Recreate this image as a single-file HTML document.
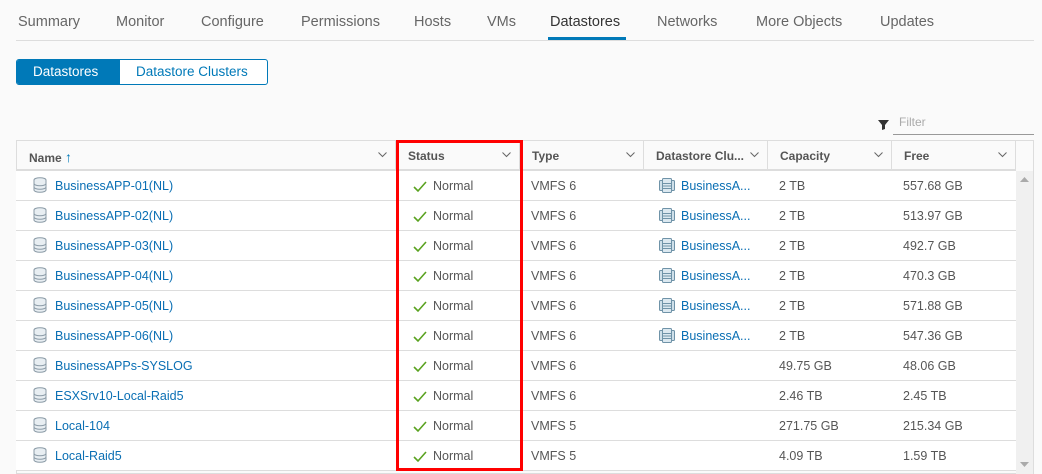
<!DOCTYPE html>
<html><head><meta charset="utf-8"><style>
*{box-sizing:border-box;margin:0;padding:0}
body{width:1042px;height:474px;overflow:hidden;background:#fafafa;font-family:"Liberation Sans",sans-serif;position:relative;color:#565656}
.a{position:absolute}
.tab{position:absolute;top:14px;font-size:14.5px;color:#666}
.hd{position:absolute;top:141px;height:30px;border-right:1px solid #ddd;font-size:12px;font-weight:bold;color:#555;padding:8px 0 0 12px}
.chev{position:absolute;right:8px;top:11px}
.row{position:absolute;left:16px;width:1000px;height:30px;border-bottom:1px solid #ddd;background:#fff;font-size:12.5px}
.row span{position:absolute;top:8px;white-space:nowrap}
.lnk{color:#0a6fb4}
</style></head><body>
<div class="tab" style="left:18px">Summary</div>
<div class="tab" style="left:116px">Monitor</div>
<div class="tab" style="left:201px">Configure</div>
<div class="tab" style="left:301px">Permissions</div>
<div class="tab" style="left:414px">Hosts</div>
<div class="tab" style="left:487px">VMs</div>
<div class="tab" style="left:550px;color:#333">Datastores</div>
<div class="tab" style="left:657px">Networks</div>
<div class="tab" style="left:756px">More Objects</div>
<div class="tab" style="left:880px">Updates</div>
<div class="a" style="left:548px;top:37px;width:78px;height:3px;background:#0079b8"></div>
<div class="a" style="left:16px;top:40px;width:1018px;height:1px;background:#ddd"></div>

<div class="a" style="left:16px;top:59px;width:252px;height:26px;border:1px solid #0079b8;border-radius:3px;background:#fff;overflow:hidden">
<div class="a" style="left:0;top:0;width:103px;height:24px;background:#0079b8;color:#fff;font-size:13.5px;padding:4px 0 0 16px">Datastores</div>
<div class="a" style="left:103px;top:0;height:24px;color:#0079b8;font-size:13.5px;padding:4px 0 0 16px;white-space:nowrap">Datastore Clusters</div>
</div>

<svg class="a" style="left:878px;top:119px" width="11" height="11" viewBox="0 0 11 11"><path d="M0 1h11L7 6v4L4 11V6z" fill="#333"/></svg>
<div class="a" style="left:899px;top:115px;font-size:12px;color:#aaa">Filter</div>
<div class="a" style="left:893px;top:134px;width:141px;height:1px;background:#999"></div>

<div class="a" style="left:16px;top:140px;width:1018px;height:334px;border:1px solid #ddd;background:#fafafa"></div>
<div class="a" style="left:1016px;top:171px;width:17px;height:303px;background:#f0f0f0"></div>
<svg class="a" style="left:1020px;top:177px" width="9" height="6"><path d="M0 5L4.5 0L9 5z" fill="#aaa"/></svg>
<svg class="a" style="left:1020px;top:462px" width="9" height="6"><path d="M0 0L4.5 5L9 0z" fill="#aaa"/></svg>

<div class="hd" style="left:17px;width:379px">Name <span style="color:#0079b8;font-weight:normal;font-size:14px">&#8593;</span><svg class="chev" width="9" height="6"><path d="M0.5 0.5L4.5 4.5L8.5 0.5" stroke="#666" fill="none"/></svg></div>
<div class="hd" style="left:396px;width:124px">Status<svg class="chev" width="9" height="6"><path d="M0.5 0.5L4.5 4.5L8.5 0.5" stroke="#666" fill="none"/></svg></div>
<div class="hd" style="left:520px;width:124px">Type<svg class="chev" width="9" height="6"><path d="M0.5 0.5L4.5 4.5L8.5 0.5" stroke="#666" fill="none"/></svg></div>
<div class="hd" style="left:644px;width:124px">Datastore Clu...<svg class="chev" width="9" height="6"><path d="M0.5 0.5L4.5 4.5L8.5 0.5" stroke="#666" fill="none"/></svg></div>
<div class="hd" style="left:768px;width:124px">Capacity<svg class="chev" width="9" height="6"><path d="M0.5 0.5L4.5 4.5L8.5 0.5" stroke="#666" fill="none"/></svg></div>
<div class="hd" style="left:892px;width:124px">Free<svg class="chev" width="9" height="6"><path d="M0.5 0.5L4.5 4.5L8.5 0.5" stroke="#666" fill="none"/></svg></div>
<div class="a" style="left:17px;top:169px;width:999px;height:2px;background:#ddd"></div>

<svg width="0" height="0" style="position:absolute"><defs>
<g id="db"><ellipse cx="7" cy="3" rx="6" ry="2.3" fill="#e8eef2" stroke="#8a9aa6"/><path d="M1 3v10c0 1.3 2.7 2.3 6 2.3s6-1 6-2.3V3" fill="#e8eef2" stroke="#8a9aa6"/><path d="M1 6.5c0 1.3 2.7 2.3 6 2.3s6-1 6-2.3M1 10c0 1.3 2.7 2.3 6 2.3s6-1 6-2.3" fill="none" stroke="#8a9aa6"/></g>
<g id="cl"><rect x="0.5" y="2.5" width="15" height="10" rx="1" fill="#cfe0ea" stroke="#6f93a8"/><rect x="3.5" y="0.5" width="9" height="14" rx="1" fill="#dbe8f0" stroke="#6f93a8"/><path d="M3.5 5.5h9M3.5 8h9M3.5 10.5h9" stroke="#6f93a8"/></g>
<path id="ck" d="M1 7l4 4L13 2" stroke="#5aa220" stroke-width="1.6" fill="none"/>
</defs></svg>

<div class="row" style="top:171px"><svg class="a" style="left:17px;top:6px" width="15" height="17"><use href="#db"/></svg><span class="lnk" style="left:39px">BusinessAPP-01(NL)</span><svg class="a" style="left:397px;top:9px" width="14" height="13"><use href="#ck"/></svg><span style="left:417px">Normal</span><span style="left:515px">VMFS 6</span><svg class="a" style="left:643px;top:7px" width="16" height="15"><use href="#cl"/></svg><span class="lnk" style="left:665px">BusinessA...</span><span style="left:763px">2 TB</span><span style="left:887px">557.68 GB</span></div>
<div class="row" style="top:201px"><svg class="a" style="left:17px;top:6px" width="15" height="17"><use href="#db"/></svg><span class="lnk" style="left:39px">BusinessAPP-02(NL)</span><svg class="a" style="left:397px;top:9px" width="14" height="13"><use href="#ck"/></svg><span style="left:417px">Normal</span><span style="left:515px">VMFS 6</span><svg class="a" style="left:643px;top:7px" width="16" height="15"><use href="#cl"/></svg><span class="lnk" style="left:665px">BusinessA...</span><span style="left:763px">2 TB</span><span style="left:887px">513.97 GB</span></div>
<div class="row" style="top:231px"><svg class="a" style="left:17px;top:6px" width="15" height="17"><use href="#db"/></svg><span class="lnk" style="left:39px">BusinessAPP-03(NL)</span><svg class="a" style="left:397px;top:9px" width="14" height="13"><use href="#ck"/></svg><span style="left:417px">Normal</span><span style="left:515px">VMFS 6</span><svg class="a" style="left:643px;top:7px" width="16" height="15"><use href="#cl"/></svg><span class="lnk" style="left:665px">BusinessA...</span><span style="left:763px">2 TB</span><span style="left:887px">492.7 GB</span></div>
<div class="row" style="top:261px"><svg class="a" style="left:17px;top:6px" width="15" height="17"><use href="#db"/></svg><span class="lnk" style="left:39px">BusinessAPP-04(NL)</span><svg class="a" style="left:397px;top:9px" width="14" height="13"><use href="#ck"/></svg><span style="left:417px">Normal</span><span style="left:515px">VMFS 6</span><svg class="a" style="left:643px;top:7px" width="16" height="15"><use href="#cl"/></svg><span class="lnk" style="left:665px">BusinessA...</span><span style="left:763px">2 TB</span><span style="left:887px">470.3 GB</span></div>
<div class="row" style="top:291px"><svg class="a" style="left:17px;top:6px" width="15" height="17"><use href="#db"/></svg><span class="lnk" style="left:39px">BusinessAPP-05(NL)</span><svg class="a" style="left:397px;top:9px" width="14" height="13"><use href="#ck"/></svg><span style="left:417px">Normal</span><span style="left:515px">VMFS 6</span><svg class="a" style="left:643px;top:7px" width="16" height="15"><use href="#cl"/></svg><span class="lnk" style="left:665px">BusinessA...</span><span style="left:763px">2 TB</span><span style="left:887px">571.88 GB</span></div>
<div class="row" style="top:321px"><svg class="a" style="left:17px;top:6px" width="15" height="17"><use href="#db"/></svg><span class="lnk" style="left:39px">BusinessAPP-06(NL)</span><svg class="a" style="left:397px;top:9px" width="14" height="13"><use href="#ck"/></svg><span style="left:417px">Normal</span><span style="left:515px">VMFS 6</span><svg class="a" style="left:643px;top:7px" width="16" height="15"><use href="#cl"/></svg><span class="lnk" style="left:665px">BusinessA...</span><span style="left:763px">2 TB</span><span style="left:887px">547.36 GB</span></div>
<div class="row" style="top:351px"><svg class="a" style="left:17px;top:6px" width="15" height="17"><use href="#db"/></svg><span class="lnk" style="left:39px">BusinessAPPs-SYSLOG</span><svg class="a" style="left:397px;top:9px" width="14" height="13"><use href="#ck"/></svg><span style="left:417px">Normal</span><span style="left:515px">VMFS 6</span><span style="left:763px">49.75 GB</span><span style="left:887px">48.06 GB</span></div>
<div class="row" style="top:381px"><svg class="a" style="left:17px;top:6px" width="15" height="17"><use href="#db"/></svg><span class="lnk" style="left:39px">ESXSrv10-Local-Raid5</span><svg class="a" style="left:397px;top:9px" width="14" height="13"><use href="#ck"/></svg><span style="left:417px">Normal</span><span style="left:515px">VMFS 6</span><span style="left:763px">2.46 TB</span><span style="left:887px">2.45 TB</span></div>
<div class="row" style="top:411px"><svg class="a" style="left:17px;top:6px" width="15" height="17"><use href="#db"/></svg><span class="lnk" style="left:39px">Local-104</span><svg class="a" style="left:397px;top:9px" width="14" height="13"><use href="#ck"/></svg><span style="left:417px">Normal</span><span style="left:515px">VMFS 5</span><span style="left:763px">271.75 GB</span><span style="left:887px">215.34 GB</span></div>
<div class="row" style="top:441px"><svg class="a" style="left:17px;top:6px" width="15" height="17"><use href="#db"/></svg><span class="lnk" style="left:39px">Local-Raid5</span><svg class="a" style="left:397px;top:9px" width="14" height="13"><use href="#ck"/></svg><span style="left:417px">Normal</span><span style="left:515px">VMFS 5</span><span style="left:763px">4.09 TB</span><span style="left:887px">1.59 TB</span></div>

<div class="a" style="left:396px;top:140px;width:127px;height:331px;border:3px solid #f00"></div>
</body></html>
